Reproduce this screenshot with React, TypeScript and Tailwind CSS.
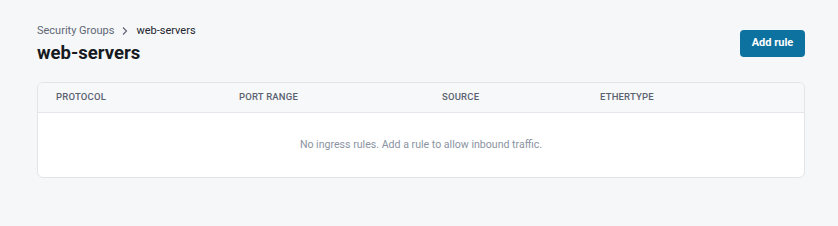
import React from "react";

export default function App() {
  const cols = ["PROTOCOL", "PORT RANGE", "SOURCE", "ETHERTYPE"];
  return (
    <div
      className="min-h-[226px] w-full bg-[#f6f7f9] pl-[37px] pr-[33px] pt-[23px] pb-[49px]"
      style={{ fontFamily: "Roboto, 'Noto Sans', sans-serif" }}
    >
      <div className="flex items-start justify-between">
        <div>
          <nav className="flex items-center gap-[7px] text-[11px] leading-[16px]">
            <span className="text-[#5f6775]">Security Groups</span>
            <svg width="8" height="10" viewBox="0 0 8 10" fill="none" className="text-[#5f6775]">
              <path d="M2 1.5 L5.5 5 L2 8.5" stroke="currentColor" strokeWidth="1.2" />
            </svg>
            <span className="text-[#21252c]">web-servers</span>
          </nav>
          <h1 className="mt-[2px] text-[18.5px] font-bold leading-[24px] text-[#161a21]">web-servers</h1>
        </div>
        <button className="mt-[7px] h-[27px] w-[65px] rounded-[4px] bg-[#0d72a0] text-[11px] font-bold text-white">
          Add rule
        </button>
      </div>
      <div className="mt-[17px] overflow-hidden rounded-[6px] border border-[#e1e4e8] bg-white">
        <div className="grid grid-cols-[183px_203px_158px_1fr] border-b border-[#e3e6ea] bg-[#f7f8fa] pl-[18px] h-[30px] items-center">
          {cols.map((c) => (
            <div key={c} className="text-[9.5px] font-medium tracking-[0.02em] text-[#5a6270]">
              {c}
            </div>
          ))}
        </div>
        <div className="flex h-[64px] items-center justify-center text-[10.6px] text-[#8b93a1]">
          No ingress rules. Add a rule to allow inbound traffic.
        </div>
      </div>
    </div>
  );
}
